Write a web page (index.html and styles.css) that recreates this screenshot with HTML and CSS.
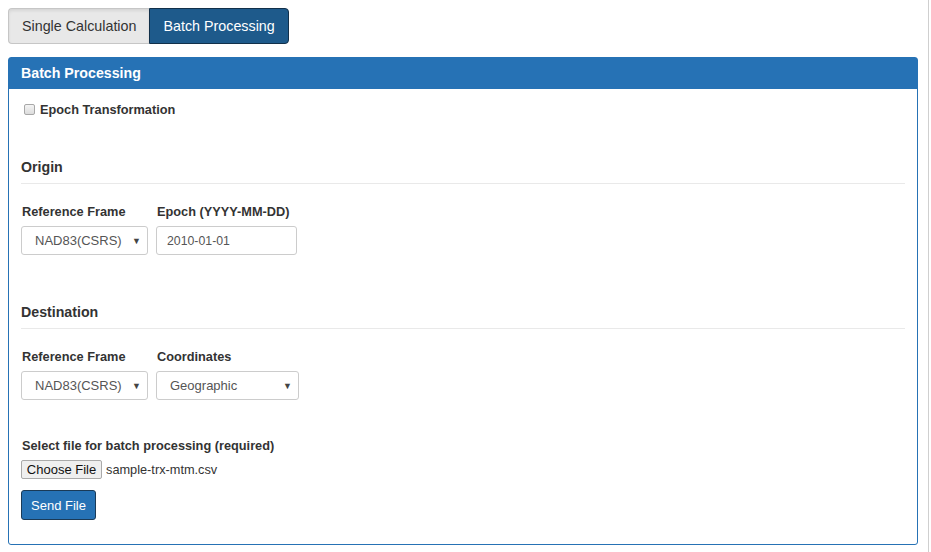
FILE: index.html
```html
<!DOCTYPE html>
<html lang="en">
<head>
<meta charset="utf-8">
<title>Batch Processing</title>
<link rel="stylesheet" href="styles.css">
</head>
<body>
<div class="page">
  <div class="tabs">
    <button class="tab">Single Calculation</button>
    <button class="tab tab-active">Batch Processing</button>
  </div>

  <div class="panel">
    <div class="panel-heading">Batch Processing</div>
    <div class="panel-body">
      <label class="check-row">
        <span class="checkbox"></span>
        <span class="check-label">Epoch Transformation</span>
      </label>

      <h3 class="section-title first">Origin</h3>
      <div class="rule"></div>
      <div class="field-row">
        <div class="field">
          <div class="field-label">Reference Frame</div>
          <div class="select select-frame"><span>NAD83(CSRS)</span><span class="arrow">▼</span></div>
        </div>
        <div class="field">
          <div class="field-label">Epoch (YYYY-MM-DD)</div>
          <div class="input input-epoch">2010-01-01</div>
        </div>
      </div>

      <h3 class="section-title second">Destination</h3>
      <div class="rule"></div>
      <div class="field-row">
        <div class="field">
          <div class="field-label">Reference Frame</div>
          <div class="select select-frame"><span>NAD83(CSRS)</span><span class="arrow">▼</span></div>
        </div>
        <div class="field">
          <div class="field-label">Coordinates</div>
          <div class="select select-coords"><span>Geographic</span><span class="arrow">▼</span></div>
        </div>
      </div>

      <div class="file-label">Select file for batch processing (required)</div>
      <div class="file-row">
        <span class="file-button">Choose File</span>
        <span class="file-name">sample-trx-mtm.csv</span>
      </div>
      <button class="send-button">Send File</button>
    </div>
  </div>
</div>
</body>
</html>
```

FILE: styles.css
```css
* { box-sizing: border-box; }
html, body { margin: 0; padding: 0; background: #fff; }
body {
  font-family: "Liberation Sans", Arial, sans-serif;
  color: #333;
  font-size: 13px;
}
.page {
  width: 929px;
  min-height: 552px;
  padding: 8px 10px 8px 8px;
  border-right: 1px solid #cfcfcf;
}
.tabs { display: flex; height: 36px; }
.tab {
  font-family: "Liberation Sans", Arial, sans-serif;
  font-size: 14.3px;
  height: 36px;
  padding: 0 13px;
  border: 1px solid #c6c6c6;
  background: #e8e8e8;
  color: #333;
  margin: 0;
  white-space: nowrap;
  cursor: pointer;
}
.tabs .tab:first-child { border-radius: 4px 0 0 4px; border-right: none; box-shadow: inset 0 2px 3px rgba(0,0,0,0.08); }
.tab-active {
  background: #1e5a8b;
  border-color: #12304a;
  color: #fff;
  border-radius: 0 4px 4px 0;
}
.panel {
  margin-top: 13px;
  border: 1px solid #2672b5;
  border-radius: 3px;
}
.panel-heading {
  background: #2672b5;
  color: #fff;
  font-weight: bold;
  font-size: 14.2px;
  height: 31px;
  line-height: 31px;
  padding-left: 12px;
}
.panel-body { padding: 10px 12px 24px 12px; }
.check-row { display: flex; align-items: center; height: 20px; }
.checkbox {
  width: 11px; height: 11px;
  margin-left: 3px; margin-right: 5px;
  border: 1px solid #a8a8a8;
  border-radius: 2px;
  background: linear-gradient(#f4f4f4, #dcdcdc);
}
.check-label { font-weight: bold; font-size: 12.75px; }
.section-title {
  margin: 0;
  font-size: 14.2px;
  font-weight: bold;
  line-height: 20px;
}
.section-title.first { margin-top: 38px; }
.section-title.second { margin-top: 47px; }
.rule { height: 1px; background: #e9e9e9; margin-top: 6px; }
.field-row { display: flex; gap: 8px; margin-top: 18px; }
.field-label { font-weight: bold; font-size: 12.75px; line-height: 20px; margin-bottom: 4px; padding-left: 1px; white-space: nowrap; }
.select, .input {
  height: 29px;
  border: 1px solid #ccc;
  border-radius: 3px;
  font-size: 13px;
  color: #555;
  display: flex;
  align-items: center;
  background: #fff;
}
.select { justify-content: space-between; padding: 0 6px 0 13px; }
.select .arrow { font-size: 9px; color: #444; }
.select-frame { width: 127px; }
.select-coords { width: 143px; }
.input { padding-left: 10px; font-size: 12.3px; }
.input-epoch { width: 141px; }
.file-label { margin-top: 36px; font-weight: bold; font-size: 12.75px; line-height: 20px; padding-left: 1px; white-space: nowrap; }
.file-row { display: flex; align-items: center; margin-top: 4px; height: 19px; }
.file-button {
  display: inline-flex; align-items: center; justify-content: center;
  height: 19px;
  padding: 0 5px;
  border: 1px solid #aaa;
  border-radius: 2px;
  background: #efefef;
  color: #111;
  font-size: 13px;
  white-space: nowrap;
  width: 81px;
}
.file-name { margin-left: 4px; font-size: 12.75px; color: #333; white-space: nowrap; }
.send-button {
  margin-top: 11px;
  height: 30px;
  padding: 0 9px;
  background: #2672b5;
  color: #fff;
  border: 1px solid #1a3a57;
  border-radius: 3px;
  font-family: "Liberation Sans", Arial, sans-serif;
  font-size: 13px;
  display: block;
}
```
